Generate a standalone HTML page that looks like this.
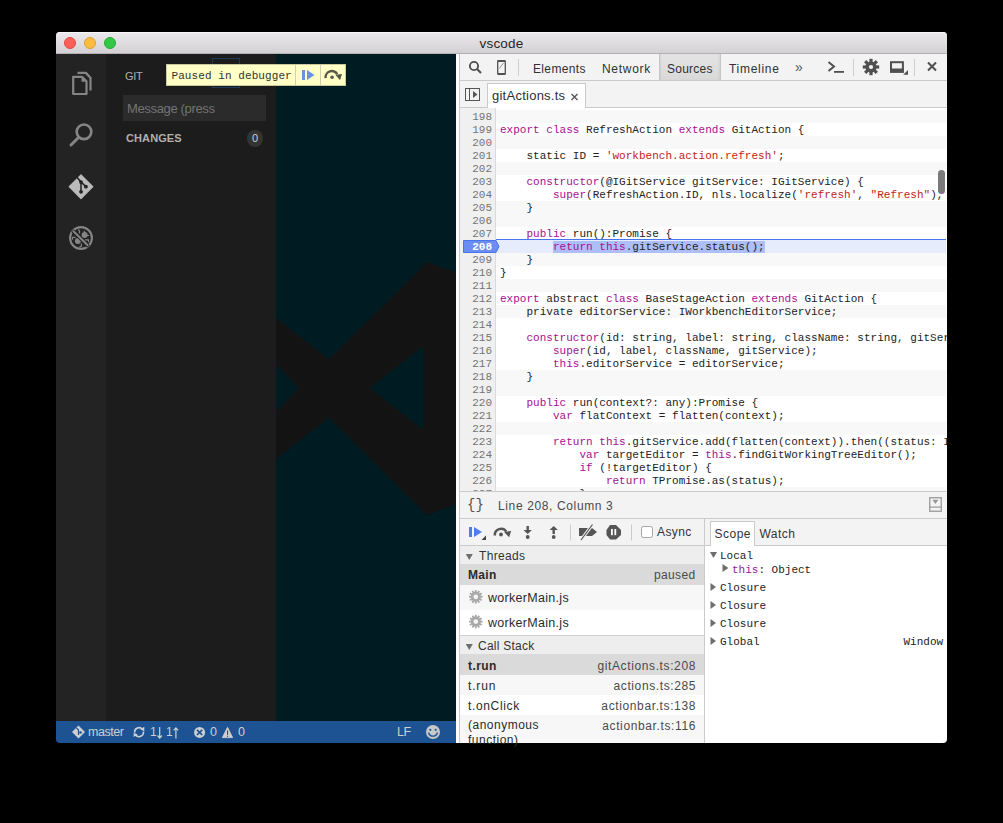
<!DOCTYPE html>
<html><head><meta charset="utf-8">
<style>
*{box-sizing:border-box;margin:0;padding:0}
html,body{width:1003px;height:823px;overflow:hidden;background:#000}
body{position:relative;font-family:"Liberation Sans",sans-serif}
.a{position:absolute}
#title{left:56px;top:32px;width:891px;height:22px;background:linear-gradient(#ebe9eb,#d3d1d3);border-bottom:1px solid #b2b0b2;border-radius:4px 4px 0 0;box-shadow:inset 0 1px 0 #f6f6f6}
.tl{top:37px;width:12px;height:12px;border-radius:50%}
#ttext{left:56px;top:36px;width:891px;text-align:center;font-size:13.5px;color:#262626;letter-spacing:0.2px}
#act{left:56px;top:54px;width:50px;height:667px;background:#232323}
#side{left:106px;top:54px;width:170px;height:667px;background:#1c1c1c}
#edit{left:276px;top:54px;width:180px;height:667px;background:#001c23;overflow:hidden}
#status{left:56px;top:721px;width:400px;height:22px;background:#1d5393;border-radius:0 0 0 4px;color:#d8d8d8;font-size:12px}
#split{left:456px;top:54px;width:4px;height:689px;background:#fff;border-right:1px solid #c8c8c8}
.mono{font-family:"Liberation Mono",monospace}
.dtb{background:#f3f3f3}
.tbt{font-size:12px;color:#303030;white-space:nowrap}
.sep{width:1px;background:#ccc}
/* code */
#code{left:460px;top:108px;width:487px;height:383px;background:#fff;overflow:hidden;font-family:"Liberation Mono",monospace;font-size:11px}
#gut{left:0;top:0;width:36px;height:383px;background:#f0f0f0;border-right:1px solid #dadada}
.row{position:absolute;left:36px;width:450px;letter-spacing:0.016px;height:13px;line-height:13px;white-space:pre;color:#222}
.row.even{background:#f8f8f8}
.row.cur{background:#e6ecfc}
.row.cur:before{content:"";position:absolute;left:0;right:0;top:-1px;height:1px;background:#4a74ee}
.ct{position:absolute;left:4px;top:1px}
.ln{position:absolute;z-index:2;left:0;width:32px;height:13px;line-height:15px;text-align:right;color:#747474}
.curln{color:#fff;font-weight:bold}
.k{color:#aa0d91}
.s{color:#c41a16}
.sel{background:#aebef6}
</style></head>
<body>
<div class="a" id="title"></div>
<div class="a tl" style="left:64px;background:#fc5f57;border:1px solid #de4a43"></div>
<div class="a tl" style="left:84px;background:#fdbb3f;border:1px solid #dfa034"></div>
<div class="a tl" style="left:104px;background:#33c748;border:1px solid #26a935"></div>
<div class="a" id="ttext">vscode</div>

<div class="a" id="act"></div>
<div class="a" id="side"></div>
<div class="a" id="edit"></div>
<div class="a" id="status"></div>
<div class="a" id="split"></div>
<!-- activity bar icons -->
<svg class="a" style="left:56px;top:54px" width="50" height="210" viewBox="0 0 50 210">
  <g fill="none" stroke="#858585" stroke-width="2.2" stroke-linejoin="round">
    <path d="M17.2 22.8 L26 22.8 L30.5 27.3 L30.5 40 L17.2 40 Z"/>
    <path d="M21.5 18.8 L29.5 18.8 L34.5 23.8 L34.5 36.5"/>
  </g>
  <path d="M25.5 22.8 L25.5 27.8 L30.5 27.8 Z" fill="#858585"/>
  <path d="M28.5 18.8 L34.5 24.8 L34.5 22.8 L30.5 17.8 Z" fill="#858585"/>
  <g fill="none" stroke="#858585">
    <circle cx="28" cy="77.8" r="7.3" stroke-width="2.6"/>
    <path d="M22.5 83.5 L15 91" stroke-width="3" stroke-linecap="round"/>
  </g>
  <g transform="translate(25 132.7)">
    <path d="M0 -11.8 L11.8 0 L0 11.8 L-11.8 0 Z" fill="#bbbbbb" stroke="#bbbbbb" stroke-width="1.2" stroke-linejoin="round"/>
    <path d="M-4.6 -10 L0 -4.8 L0 5 M0 -4.8 L4.9 0" fill="none" stroke="#232323" stroke-width="1.5"/>
    <circle cx="0" cy="-4.6" r="1.9" fill="#232323"/>
    <circle cx="4.9" cy="0" r="1.9" fill="#232323"/>
    <circle cx="0" cy="5.1" r="1.9" fill="#232323"/>
  </g>
  <g transform="translate(25 184)" fill="#858585">
    <circle r="10.9" fill="none" stroke="#858585" stroke-width="2.1"/>
    <circle cx="-3.1" cy="3.1" r="3"/>
    <circle cx="3.6" cy="-3" r="3"/>
    <path d="M-9 -0.6 L-5.5 -0.6 M-8.6 -0.6 L-8.6 1.8 M-1.5 -7.8 L-1.5 -4.5 M-3 -7.8 L-1.5 -7.8 M3.3 -7.3 L3.3 -5 M4 1.8 L7.9 1.8 M7.5 1.8 L7.5 4.2 M0.4 5.5 L0.4 8.6 M-1.6 8.6 L0.4 8.6 M6 -2.5 L8 -2.5" fill="none" stroke="#858585" stroke-width="1.2"/>
    <path d="M-8.5 -7.5 L7.5 8.5" stroke="#232323" stroke-width="3.8"/>
    <path d="M-8 -7.2 L7.2 7.8" stroke="#858585" stroke-width="2"/>
  </g>
</svg>
<!-- sidebar -->
<div class="a" style="left:125px;top:70px;font-size:11px;color:#b0b0b0;letter-spacing:-0.3px">GIT</div>
<div class="a" style="left:123px;top:95px;width:143px;height:26px;background:#2b2b2b"></div>
<div class="a" style="left:127px;top:101px;font-size:13px;color:#737373;letter-spacing:-0.35px">Message (press</div>
<div class="a" style="left:126px;top:132px;font-size:11px;color:#b0b0b0;font-weight:bold;letter-spacing:0.1px">CHANGES</div>
<div class="a" style="left:247px;top:130px;width:16px;height:17px;border-radius:8px;background:#333;color:#ccc;font-size:11px;text-align:center;line-height:17px">0</div>
<!-- editor logo -->
<svg class="a" style="left:276px;top:54px" width="180" height="667" viewBox="276 54 180 667">
  <path fill="#131313" fill-rule="evenodd" d="M250 298 L329 359 L427 262 L480 281 L480 496 L427 515 L329 417.5 L250 479.5 Z M299 388 L250 339 L250 437 Z M370 388 L423.5 346 L423.5 430 Z"/>
</svg>
<!-- tooltip -->
<div class="a" style="left:212px;top:58px;width:28px;height:30px;border:1px solid #1e3c5a"></div>
<div class="a" style="left:166px;top:64px;width:180px;height:22px;background:#ffffc6;border:1px solid #c9c79e"></div>
<div class="a mono" style="left:171.5px;top:70px;font-size:11px;color:#333;letter-spacing:0.08px">Paused in debugger</div>
<div class="a" style="left:295px;top:65px;width:1px;height:20px;background:#cfcdb8"></div>
<div class="a" style="left:320px;top:65px;width:1px;height:20px;background:#cfcdb8"></div>
<svg class="a" style="left:296px;top:64px" width="50" height="22" viewBox="0 0 50 22">
  <rect x="6" y="6" width="3" height="10" fill="#6c8fe8"/>
  <path d="M11 6 L18.5 11 L11 16 Z" fill="#6c8fe8"/>
  <path d="M29.6 14.2 A6.3 6.3 0 0 1 41.3 10.2" fill="none" stroke="#58584a" stroke-width="2.4"/>
  <path d="M39.3 10.8 L46 10 L44 16.2 Z" fill="#58584a"/>
  <circle cx="36.1" cy="13.3" r="1.8" fill="#58584a"/>
</svg>
<!-- status bar -->
<svg class="a" style="left:56px;top:721px" width="400" height="22" viewBox="0 0 400 22">
  <path d="M22.5 4.5 L29 11 L22.5 17.5 L16 11 Z" fill="#cfcfcf"/>
  <path d="M20.5 7 L22.5 9 L22.5 14" fill="none" stroke="#1d5393" stroke-width="1.2"/>
  <circle cx="24.5" cy="11.5" r="1.3" fill="#1d5393"/>
  <g fill="none" stroke="#cfcfcf" stroke-width="1.6">
    <path d="M78.6 11.5 A4.4 4.4 0 0 1 86.5 8.5"/>
    <path d="M87.4 10.5 A4.4 4.4 0 0 1 79.5 13.8"/>
  </g>
  <path d="M84.3 8.2 L88.3 5.8 L88.3 10.2 Z" fill="#cfcfcf"/>
  <path d="M81.7 13.6 L77.7 16 L77.7 11.8 Z" fill="#cfcfcf"/>
  <path d="M103.7 6 L103.7 16.5 M101.5 14.5 L103.7 17 L105.9 14.5" fill="none" stroke="#cfcfcf" stroke-width="1.2"/>
  <path d="M119.9 7 L119.9 17.6 M117.7 9.3 L119.9 6.8 L122.1 9.3" fill="none" stroke="#cfcfcf" stroke-width="1.2"/>
  <circle cx="143.6" cy="11.4" r="5.5" fill="#cdcdcd"/>
  <path d="M141 8.8 L146.2 14 M146.2 8.8 L141 14" stroke="#1d5393" stroke-width="1.7"/>
  <path d="M171.5 6.3 L176.6 16.6 L166.4 16.6 Z" fill="#cdcdcd" stroke="#cdcdcd" stroke-width="0.9" stroke-linejoin="round"/>
  <rect x="171" y="9.5" width="1.1" height="4.3" fill="#1d5393"/>
  <rect x="171" y="14.8" width="1.1" height="1.1" fill="#1d5393"/>
  <circle cx="377" cy="11" r="7" fill="#c8c8c8"/>
  <circle cx="374.3" cy="8.8" r="1.1" fill="#1d5393"/>
  <circle cx="379.7" cy="8.8" r="1.1" fill="#1d5393"/>
  <path d="M372.5 11.5 A4.6 4.6 0 0 0 381.5 11.5" fill="none" stroke="#1d5393" stroke-width="1.3"/>
</svg>
<div class="a" style="left:88px;top:725px;font-size:12.5px;color:#cecece;letter-spacing:-0.45px">master</div>
<div class="a" style="left:150px;top:725px;font-size:12px;color:#cecece">1</div><div class="a" style="left:166px;top:725px;font-size:12px;color:#cecece">1</div>
<div class="a" style="left:210px;top:725px;font-size:12.5px;color:#cecece">0</div>
<div class="a" style="left:238px;top:725px;font-size:12.5px;color:#cecece">0</div>
<div class="a" style="left:397px;top:725px;font-size:12.5px;color:#cecece;letter-spacing:-0.5px">LF</div>

<!-- devtools toolbar -->
<div class="a dtb" style="left:460px;top:54px;width:487px;height:27px;border-bottom:1px solid #cbcbcb"></div>
<div class="a dtb" style="left:460px;top:81px;width:487px;height:27px;border-bottom:1px solid #cbcbcb"></div>
<!-- toolbar icons -->
<svg class="a" style="left:460px;top:54px" width="487" height="26" viewBox="0 0 487 26">
  <g fill="none" stroke="#505050">
    <circle cx="14" cy="12" r="4.1" stroke-width="1.9"/>
    <path d="M17 15 L21 19" stroke-width="2.2"/>
    <rect x="37.7" y="6.9" width="7.6" height="13.2" rx="1" stroke-width="1.3"/>
    <path d="M37.5 7 L45.5 7 M37.5 20 L45.5 20" stroke-width="1.8"/>
    <path d="M39.3 14.5 L43.5 9" stroke-width="0.9" stroke="#888"/>
  </g>
  <rect x="58" y="5" width="1" height="17" fill="#cfcfcf"/>
</svg>
<div class="a tbt" style="left:533px;top:62px;letter-spacing:0.35px">Elements</div>
<div class="a tbt" style="left:602px;top:62px;letter-spacing:0.7px">Network</div>
<div class="a" style="left:659px;top:54px;width:62px;height:26px;background:linear-gradient(#e4e4e4,#d9d9d9);box-shadow:inset 1px 0 0 #c4c4c4,inset -1px 0 0 #c4c4c4,inset 3px 0 3px -2px rgba(0,0,0,.12),inset -3px 0 3px -2px rgba(0,0,0,.12)"></div>
<div class="a tbt" style="left:667px;top:62px;letter-spacing:0.25px">Sources</div>
<div class="a tbt" style="left:729px;top:62px;letter-spacing:0.7px">Timeline</div>
<div class="a tbt" style="left:795px;top:59px;font-size:14px;color:#555">&raquo;</div>
<svg class="a" style="left:820px;top:54px" width="127" height="26" viewBox="0 0 127 26">
  <path d="M8.5 8 L14 12.5 L8.5 17" fill="none" stroke="#505050" stroke-width="2"/>
  <rect x="14" y="17" width="10" height="1.8" fill="#505050"/>
  <rect x="33" y="5" width="1" height="17" fill="#cfcfcf"/>
  <g transform="translate(51 13)" fill="#505050">
    <circle r="5.6"/>
    <rect x="-1.6" y="-8.2" width="3.2" height="4" transform="rotate(0)"/><rect x="-1.6" y="-8.2" width="3.2" height="4" transform="rotate(45)"/><rect x="-1.6" y="-8.2" width="3.2" height="4" transform="rotate(90)"/><rect x="-1.6" y="-8.2" width="3.2" height="4" transform="rotate(135)"/><rect x="-1.6" y="-8.2" width="3.2" height="4" transform="rotate(180)"/><rect x="-1.6" y="-8.2" width="3.2" height="4" transform="rotate(225)"/><rect x="-1.6" y="-8.2" width="3.2" height="4" transform="rotate(270)"/><rect x="-1.6" y="-8.2" width="3.2" height="4" transform="rotate(315)"/>
    <circle r="2.1" fill="#f3f3f3"/>
  </g>
  <rect x="71" y="8.2" width="11.9" height="9.5" fill="none" stroke="#505050" stroke-width="2"/>
  <rect x="70" y="14.5" width="13.9" height="4.2" fill="#505050"/>
  <path d="M88 16 L88 20.8 L83.2 20.8 Z" fill="#505050"/>
  <rect x="94" y="5" width="1" height="17" fill="#cfcfcf"/>
  <path d="M108 8.5 L116 16.5 M116 8.5 L108 16.5" stroke="#505050" stroke-width="2"/>
</svg>
<!-- tab row -->
<svg class="a" style="left:460px;top:81px" width="30" height="26" viewBox="0 0 30 26">
  <rect x="5.5" y="7.5" width="14" height="12" fill="none" stroke="#555" stroke-width="1"/>
  <rect x="9" y="8" width="1" height="11" fill="#555"/>
  <path d="M13 10 L17.5 13.5 L13 17 Z" fill="#555"/>
</svg>
<div class="a" style="left:487px;top:83px;width:99px;height:25px;background:#fff;border:1px solid #cbcbcb;border-bottom:none"></div>
<div class="a tbt" style="left:492px;top:88px;font-size:13px;letter-spacing:0.25px">gitActions.ts</div>
<svg class="a" style="left:570px;top:91.5px" width="10" height="10" viewBox="0 0 10 10"><path d="M1.5 2 L7.5 8 M7.5 2 L1.5 8" stroke="#555" stroke-width="1.4"/></svg>

<!-- code -->
<div class="a" id="code">
<div class="a" id="gut"></div>
<svg class="a" style="left:3px;top:132px;z-index:1" width="40" height="13" viewBox="0 0 40 13"><path d="M0.5 0.5 L33 0.5 L36 6.5 L33 12.5 L0.5 12.5 Z" fill="#6b8ef5" stroke="#4a74ee" stroke-width="1"/></svg>
<div class="row" style="top:-11px"><span class="ct"></span></div><div class="ln" style="top:-11px">197</div>
<div class="row even" style="top:2px"><span class="ct"></span></div><div class="ln" style="top:2px">198</div>
<div class="row" style="top:15px"><span class="ct"><span class="k">export</span> <span class="k">class</span> RefreshAction <span class="k">extends</span> GitAction {</span></div><div class="ln" style="top:15px">199</div>
<div class="row even" style="top:28px"><span class="ct"></span></div><div class="ln" style="top:28px">200</div>
<div class="row" style="top:41px"><span class="ct">    static ID = <span class="s">'workbench.action.refresh'</span>;</span></div><div class="ln" style="top:41px">201</div>
<div class="row even" style="top:54px"><span class="ct"></span></div><div class="ln" style="top:54px">202</div>
<div class="row" style="top:67px"><span class="ct">    <span class="k">constructor</span>(@IGitService gitService: IGitService) {</span></div><div class="ln" style="top:67px">203</div>
<div class="row" style="top:80px"><span class="ct">        <span class="k">super</span>(RefreshAction.ID, nls.localize(<span class="s">'refresh'</span>, <span class="s">"Refresh"</span>), <span class="s">'git-action refresh'</span>, gitService);</span></div><div class="ln" style="top:80px">204</div>
<div class="row even" style="top:93px"><span class="ct">    }</span></div><div class="ln" style="top:93px">205</div>
<div class="row even" style="top:106px"><span class="ct"></span></div><div class="ln" style="top:106px">206</div>
<div class="row" style="top:119px"><span class="ct">    <span class="k">public</span> run():Promise {</span></div><div class="ln" style="top:119px">207</div>
<div class="row cur" style="top:132px"><span class="ct">        <span class="sel"><span class="k">return</span> <span class="k">this</span>.gitService.status();</span></span></div><div class="ln curln" style="top:132px">208</div>
<div class="row even" style="top:145px"><span class="ct">    }</span></div><div class="ln" style="top:145px">209</div>
<div class="row" style="top:158px"><span class="ct">}</span></div><div class="ln" style="top:158px">210</div>
<div class="row even" style="top:171px"><span class="ct"></span></div><div class="ln" style="top:171px">211</div>
<div class="row" style="top:184px"><span class="ct"><span class="k">export</span> abstract <span class="k">class</span> BaseStageAction <span class="k">extends</span> GitAction {</span></div><div class="ln" style="top:184px">212</div>
<div class="row even" style="top:197px"><span class="ct">    private editorService: IWorkbenchEditorService;</span></div><div class="ln" style="top:197px">213</div>
<div class="row" style="top:210px"><span class="ct"></span></div><div class="ln" style="top:210px">214</div>
<div class="row" style="top:223px"><span class="ct">    <span class="k">constructor</span>(id: string, label: string, className: string, gitService: IGitService, @IWorkbenchEditorService editorService) {</span></div><div class="ln" style="top:223px">215</div>
<div class="row" style="top:236px"><span class="ct">        <span class="k">super</span>(id, label, className, gitService);</span></div><div class="ln" style="top:236px">216</div>
<div class="row" style="top:249px"><span class="ct">        <span class="k">this</span>.editorService = editorService;</span></div><div class="ln" style="top:249px">217</div>
<div class="row even" style="top:262px"><span class="ct">    }</span></div><div class="ln" style="top:262px">218</div>
<div class="row even" style="top:275px"><span class="ct"></span></div><div class="ln" style="top:275px">219</div>
<div class="row" style="top:288px"><span class="ct">    <span class="k">public</span> run(context?: any):Promise {</span></div><div class="ln" style="top:288px">220</div>
<div class="row" style="top:301px"><span class="ct">        <span class="k">var</span> flatContext = flatten(context);</span></div><div class="ln" style="top:301px">221</div>
<div class="row even" style="top:314px"><span class="ct"></span></div><div class="ln" style="top:314px">222</div>
<div class="row" style="top:327px"><span class="ct">        <span class="k">return</span> <span class="k">this</span>.gitService.add(flatten(context)).then((status: IModel) =&gt; {</span></div><div class="ln" style="top:327px">223</div>
<div class="row" style="top:340px"><span class="ct">            <span class="k">var</span> targetEditor = <span class="k">this</span>.findGitWorkingTreeEditor();</span></div><div class="ln" style="top:340px">224</div>
<div class="row" style="top:353px"><span class="ct">            <span class="k">if</span> (!targetEditor) {</span></div><div class="ln" style="top:353px">225</div>
<div class="row" style="top:366px"><span class="ct">                <span class="k">return</span> TPromise.as(status);</span></div><div class="ln" style="top:366px">226</div>
<div class="row even" style="top:379px"><span class="ct">            }</span></div><div class="ln" style="top:379px">227</div>

<div class="a" style="left:478px;top:62px;width:7px;height:24px;border-radius:3.5px;background:#7a7a7a;z-index:3"></div>
</div>

<!-- status line -->
<div class="a dtb" style="left:460px;top:491px;width:487px;height:28px;border-top:1px solid #cbcbcb;border-bottom:1px solid #cbcbcb"></div>
<div class="a dtb" style="left:460px;top:519px;width:487px;height:27px;border-bottom:1px solid #cbcbcb"></div>
<div class="a" style="left:460px;top:546px;width:487px;height:197px;background:#fff;border-radius:0 0 4px 0"></div>
<div class="a mono" style="left:467px;top:497px;font-size:14px;color:#505050;letter-spacing:0px">{}</div>
<div class="a tbt" style="left:498px;top:499px;color:#4a4a4a;letter-spacing:0.63px">Line 208, Column 3</div>
<svg class="a" style="left:929px;top:497px" width="14" height="15" viewBox="0 0 14 15">
  <rect x="0.75" y="0.75" width="11.5" height="13.5" fill="none" stroke="#999" stroke-width="1.3"/>
  <rect x="0.5" y="9.5" width="12" height="1.2" fill="#999"/>
  <path d="M3.3 2.8 L9.5 2.8 L6.4 7 Z" fill="#999"/>
</svg>
<!-- debugger toolbar -->
<svg class="a" style="left:460px;top:519px" width="240" height="26" viewBox="0 0 240 26">
  <rect x="9" y="8" width="3" height="10" fill="#4b7ff0"/>
  <path d="M14 8 L22 13 L14 18 Z" fill="#4b7ff0"/>
  <path d="M21.5 21 L26 16.5 L26 21 Z" fill="#444"/>
  <path d="M34.8 16.5 A6.3 6.3 0 0 1 46.3 12.6" fill="none" stroke="#555" stroke-width="2.5"/>
  <path d="M44.2 13.2 L51.2 11.8 L49.2 18.3 Z" fill="#555"/>
  <circle cx="41" cy="15.5" r="1.9" fill="#555"/>
  <rect x="66.5" y="7" width="2.4" height="5" fill="#555"/>
  <path d="M63.5 11 L71.9 11 L67.7 15 Z" fill="#555"/>
  <circle cx="67.7" cy="18" r="1.9" fill="#555"/>
  <rect x="92.5" y="10.5" width="2.4" height="4.5" fill="#555"/>
  <path d="M89.5 11 L97.9 11 L93.7 7 Z" fill="#555"/>
  <circle cx="93.7" cy="18" r="1.9" fill="#555"/>
  <rect x="110" y="5.5" width="1" height="16" fill="#ccc"/>
  <path d="M119 9 L132 9 L137 13 L132 17 L119 17 Z" fill="#555"/>
  <path d="M121 21 L132.5 5.5" stroke="#f3f3f3" stroke-width="3"/>
  <path d="M121 21 L132.5 5.5" stroke="#555" stroke-width="1.2"/>
  <path d="M150 6 L156 6 L161 11 L161 16 L156 20.5 L150 20.5 L146.5 16 L146.5 11 Z" fill="#555"/>
  <rect x="151" y="10" width="1.8" height="6.2" fill="#fff"/>
  <rect x="154.4" y="10" width="1.8" height="6.2" fill="#fff"/>
  <rect x="171" y="5.5" width="1" height="16" fill="#ccc"/>
  <rect x="181.5" y="7.5" width="11" height="11" rx="2" fill="#fff" stroke="#a5a5a5" stroke-width="1"/>
</svg>
<div class="a tbt" style="left:657px;top:525px;color:#333;letter-spacing:0.4px">Async</div>
<div class="a" style="left:704px;top:519px;width:1px;height:224px;background:#cbcbcb"></div>
<!-- scope tabs -->
<div class="a" style="left:710px;top:521px;width:45px;height:25px;background:#fff;border:1px solid #cbcbcb;border-bottom:none"></div>
<div class="a tbt" style="left:714.5px;top:527px;color:#333;font-size:12px;letter-spacing:0.5px">Scope</div>
<div class="a tbt" style="left:759.5px;top:527px;color:#333;font-size:12px;letter-spacing:0.45px">Watch</div>
<!-- left pane -->
<div class="a" style="left:460px;top:546px;width:244px;height:18px;background:#eee"></div>
<div class="a tbt" style="left:479px;top:549px;color:#333;letter-spacing:0.35px">Threads</div>
<div class="a" style="left:460px;top:564px;width:244px;height:21px;background:#dadada"></div>
<div class="a tbt" style="left:468px;top:568px;color:#2a2a2a;font-weight:bold;letter-spacing:0.35px">Main</div>
<div class="a tbt" style="left:654px;top:568px;color:#4a4a4a;letter-spacing:0.35px">paused</div>
<div class="a" style="left:460px;top:585px;width:244px;height:25px;background:#f7f7f7"></div>
<div class="a tbt" style="left:488px;top:591px;color:#2a2a2a;font-size:12.5px;letter-spacing:0.3px">workerMain.js</div>
<div class="a tbt" style="left:488px;top:616px;color:#2a2a2a;font-size:12.5px;letter-spacing:0.3px">workerMain.js</div>
<div class="a" style="left:460px;top:635px;width:244px;height:19px;background:#eee;border-top:1px solid #d0d0d0"></div>
<div class="a tbt" style="left:478px;top:639px;color:#333;letter-spacing:0.25px">Call Stack</div>
<div class="a" style="left:460px;top:654px;width:244px;height:21px;background:#dadada"></div>
<div class="a tbt" style="left:468px;top:658.5px;color:#2a2a2a;font-weight:bold;letter-spacing:0.4px">t.run</div>
<div class="a tbt" style="left:590px;top:658.5px;color:#4a4a4a;width:106px;text-align:right;letter-spacing:0.62px">gitActions.ts:208</div>
<div class="a" style="left:460px;top:675px;width:244px;height:20px;background:#f7f7f7"></div>
<div class="a tbt" style="left:468px;top:678.5px;color:#2a2a2a;letter-spacing:0.85px">t.run</div>
<div class="a tbt" style="left:590px;top:678.5px;color:#4a4a4a;width:106px;text-align:right;letter-spacing:0.6px">actions.ts:285</div>
<div class="a tbt" style="left:468px;top:698.5px;color:#2a2a2a;letter-spacing:0.65px">t.onClick</div>
<div class="a tbt" style="left:590px;top:698.5px;color:#4a4a4a;width:106px;text-align:right;letter-spacing:0.62px">actionbar.ts:138</div>
<div class="a" style="left:460px;top:715px;width:244px;height:28px;background:#f7f7f7"></div>
<div class="a tbt" style="left:468px;top:718px;color:#2a2a2a;line-height:15px;letter-spacing:0.5px">(anonymous<br>function)</div>
<div class="a tbt" style="left:590px;top:718.5px;color:#4a4a4a;width:106px;text-align:right;letter-spacing:0.62px">actionbar.ts:116</div>
<svg class="a" style="left:460px;top:546px" width="30" height="120" viewBox="0 0 30 120">
  <g transform="translate(15.8 50.8)"><g fill="#a8a8a8"><rect x="-0.9" y="-6.8" width="1.8" height="3" transform="rotate(0)"/><rect x="-0.9" y="-6.8" width="1.8" height="3" transform="rotate(30)"/><rect x="-0.9" y="-6.8" width="1.8" height="3" transform="rotate(60)"/><rect x="-0.9" y="-6.8" width="1.8" height="3" transform="rotate(90)"/><rect x="-0.9" y="-6.8" width="1.8" height="3" transform="rotate(120)"/><rect x="-0.9" y="-6.8" width="1.8" height="3" transform="rotate(150)"/><rect x="-0.9" y="-6.8" width="1.8" height="3" transform="rotate(180)"/><rect x="-0.9" y="-6.8" width="1.8" height="3" transform="rotate(210)"/><rect x="-0.9" y="-6.8" width="1.8" height="3" transform="rotate(240)"/><rect x="-0.9" y="-6.8" width="1.8" height="3" transform="rotate(270)"/><rect x="-0.9" y="-6.8" width="1.8" height="3" transform="rotate(300)"/><rect x="-0.9" y="-6.8" width="1.8" height="3" transform="rotate(330)"/><circle r="5"/><circle r="2.4" fill="#f4f4f4"/></g></g>
  <g transform="translate(15.8 75.6)"><g fill="#a8a8a8"><rect x="-0.9" y="-6.8" width="1.8" height="3" transform="rotate(0)"/><rect x="-0.9" y="-6.8" width="1.8" height="3" transform="rotate(30)"/><rect x="-0.9" y="-6.8" width="1.8" height="3" transform="rotate(60)"/><rect x="-0.9" y="-6.8" width="1.8" height="3" transform="rotate(90)"/><rect x="-0.9" y="-6.8" width="1.8" height="3" transform="rotate(120)"/><rect x="-0.9" y="-6.8" width="1.8" height="3" transform="rotate(150)"/><rect x="-0.9" y="-6.8" width="1.8" height="3" transform="rotate(180)"/><rect x="-0.9" y="-6.8" width="1.8" height="3" transform="rotate(210)"/><rect x="-0.9" y="-6.8" width="1.8" height="3" transform="rotate(240)"/><rect x="-0.9" y="-6.8" width="1.8" height="3" transform="rotate(270)"/><rect x="-0.9" y="-6.8" width="1.8" height="3" transform="rotate(300)"/><rect x="-0.9" y="-6.8" width="1.8" height="3" transform="rotate(330)"/><circle r="5"/><circle r="2.4" fill="#f4f4f4"/></g></g>
  <path d="M5.8 8 L12.8 8 L9.3 14 Z" fill="#6e6e6e"/>
  <path d="M5.8 98 L12.8 98 L9.3 104 Z" fill="#6e6e6e"/>
</svg>
<!-- scope pane -->
<div class="a mono" style="left:705px;top:547px;width:242px;height:196px;font-size:11px;color:#222;line-height:13px">
  <div class="a" style="left:15px;top:3px">Local</div>
  <div class="a" style="left:27px;top:17px"><span style="color:#8d1a9f">this</span>: Object</div>
  <div class="a" style="left:15px;top:35px">Closure</div>
  <div class="a" style="left:15px;top:53px">Closure</div>
  <div class="a" style="left:15px;top:71px">Closure</div>
  <div class="a" style="left:15px;top:89px">Global</div>
  <div class="a" style="left:198.5px;top:89px">Window</div>
</div>
<svg class="a" style="left:705px;top:546px" width="30" height="110" viewBox="0 0 30 110">
  <path d="M5 6 L12 6 L8.5 12 Z" fill="#6e6e6e"/>
  <path d="M17.5 18 L23.5 22 L17.5 26 Z" fill="#6e6e6e"/>
  <path d="M5.5 37 L11 41 L5.5 45 Z" fill="#6e6e6e"/>
  <path d="M5.5 55 L11 59 L5.5 63 Z" fill="#6e6e6e"/>
  <path d="M5.5 73 L11 77 L5.5 81 Z" fill="#6e6e6e"/>
  <path d="M5.5 91 L11 95 L5.5 99 Z" fill="#6e6e6e"/>
</svg>
</body></html>
